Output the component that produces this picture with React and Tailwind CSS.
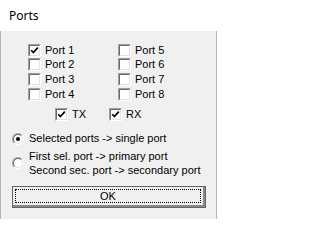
const LEFT = ['Port 1', 'Port 2', 'Port 3', 'Port 4']
const RIGHT = ['Port 5', 'Port 6', 'Port 7', 'Port 8']
const ROW_GAP = ['mt-0', 'mt-[1px]', 'mt-[2px]', 'mt-[2px]']

function Check({ on }) {
  return (
    <span className="w-[13px] h-[13px] shrink-0 border border-t-[#a0a0a0] border-l-[#a0a0a0] border-b-white border-r-white">
      <span className="flex items-center justify-center w-full h-full bg-white border border-t-[#696969] border-l-[#696969] border-b-[#e3e3e3] border-r-[#e3e3e3]">
        {on && (
          <svg width="9" height="9" viewBox="0 0 9 9">
            <path d="M1.2 4.2 L3.4 6.6 L7.8 1.6" fill="none" stroke="#000" strokeWidth="1.7" />
          </svg>
        )}
      </span>
    </span>
  )
}

function Box({ label, on, className = '' }) {
  return (
    <div className={`flex items-center gap-[4px] h-[13px] ${className}`}>
      <Check on={on} />
      <span className="leading-[13px]">{label}</span>
    </div>
  )
}

function Radio({ on }) {
  return (
    <span className="w-[12px] h-[12px] shrink-0 rounded-full border border-t-[#a0a0a0] border-l-[#a0a0a0] border-b-white border-r-white">
      <span className="flex items-center justify-center w-full h-full rounded-full bg-white border border-t-[#696969] border-l-[#696969] border-b-[#e3e3e3] border-r-[#e3e3e3]">
        {on && <span className="w-[4px] h-[4px] rounded-full bg-black" />}
      </span>
    </span>
  )
}

export default function App() {
  return (
    <div
      className="w-[217px] h-[219px] flex flex-col overflow-hidden text-[11px] text-black"
      style={{ fontFamily: '"Liberation Sans", Arial, sans-serif' }}
    >
      <div
        className="h-[31px] shrink-0 bg-white flex items-center pl-[9px] text-[12px]"
        style={{ fontFamily: '"Noto Sans", "Open Sans", sans-serif' }}
      >
        Ports
      </div>
      <div className="flex-1 bg-[#f0f0f0] border-l border-r border-[#b4b4b4] flex flex-col">
        <div className="flex mt-[13px]">
          <div className="flex flex-col pl-[27px] w-[117px]">
            {LEFT.map((p, i) => (
              <Box key={p} label={p} on={i === 0} className={ROW_GAP[i]} />
            ))}
          </div>
          <div className="flex flex-col">
            {RIGHT.map((p, i) => (
              <Box key={p} label={p} className={ROW_GAP[i]} />
            ))}
          </div>
        </div>

        <div className="flex mt-[7px] pl-[54px]">
          <Box label="TX" on className="w-[54px]" />
          <Box label="RX" on />
        </div>

        <div className="flex items-center gap-[5px] pl-[11px] mt-[11px] h-[13px]">
          <Radio on />
          <span className="leading-[13px]">Selected ports -&gt; single port</span>
        </div>

        <div className="flex items-center gap-[5px] pl-[11px] mt-[4px]">
          <Radio />
          <div className="flex flex-col leading-[14px]">
            <span>First sel. port -&gt; primary port</span>
            <span>Second sec. port -&gt; secondary port</span>
          </div>
        </div>

        <button className="mt-[9px] ml-[11px] w-[194px] h-[22px] shrink-0 border border-[#646464] bg-[#f0f0f0] p-0">
          <span className="flex w-full h-full border-b-2 border-r-2 border-[#8a8a8a] p-[2px]">
            <span className="flex flex-1 items-center justify-center border border-dotted border-black leading-none">
              OK
            </span>
          </span>
        </button>
      </div>
    </div>
  )
}
